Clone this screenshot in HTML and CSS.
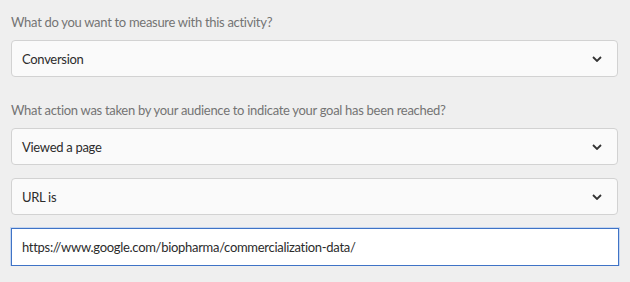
FILE: index.html
```html
<!DOCTYPE html>
<html>
<head>
<meta charset="utf-8">
<link rel="stylesheet" href="styles.css">
</head>
<body>
<div class="form">
  <div class="group">
    <div class="label">What do you want to measure with this activity?</div>
    <div class="select"><span>Conversion</span><svg class="chev" width="10" height="6" viewBox="0 0 10 6"><path d="M1 1 L5 5 L9 1" fill="none" stroke="#333" stroke-width="1.8"/></svg></div>
  </div>
  <div class="group">
    <div class="label">What action was taken by your audience to indicate your goal has been reached?</div>
    <div class="stack">
      <div class="select"><span>Viewed a page</span><svg class="chev" width="10" height="6" viewBox="0 0 10 6"><path d="M1 1 L5 5 L9 1" fill="none" stroke="#333" stroke-width="1.8"/></svg></div>
      <div class="select"><span>URL is</span><svg class="chev" width="10" height="6" viewBox="0 0 10 6"><path d="M1 1 L5 5 L9 1" fill="none" stroke="#333" stroke-width="1.8"/></svg></div>
      <div class="input">https://www.google.com/biopharma/commercialization-data/</div>
    </div>
  </div>
</div>
</body>
</html>
```
FILE: styles.css
```css
html, body {
  margin: 0;
  padding: 0;
  background: #efefef;
  font-family: Lato, "Open Sans", sans-serif;
}
.form {
  padding: 13px 11px 0 11px;
  width: 608px;
  display: flex;
  flex-direction: column;
  gap: 24px;
}
.group {
  display: flex;
  flex-direction: column;
  gap: 9px;
}
.label {
  font-size: 13px;
  line-height: 18px;
  letter-spacing: -0.3px;
  color: #747474;
}
.stack {
  display: flex;
  flex-direction: column;
  gap: 13px;
}
.select {
  box-sizing: border-box;
  height: 37px;
  width: 607px;
  background: #fafafa;
  border: 1px solid #d2d2d2;
  border-radius: 4px;
  display: flex;
  align-items: center;
  justify-content: space-between;
  padding: 0 15px 0 10px;
  font-size: 13px;
  letter-spacing: -0.3px;
  color: #2c2c2c;
}
.chev {
  display: block;
}
.input {
  box-sizing: border-box;
  height: 38px;
  width: 608px;
  background: #fff;
  border: 1px solid #3f73c6;
  box-shadow: 0 0 0 1px #c5d6f0;
  display: flex;
  align-items: center;
  padding: 0 10px;
  font-size: 13px;
  letter-spacing: -0.3px;
  color: #2c2c2c;
}
```
